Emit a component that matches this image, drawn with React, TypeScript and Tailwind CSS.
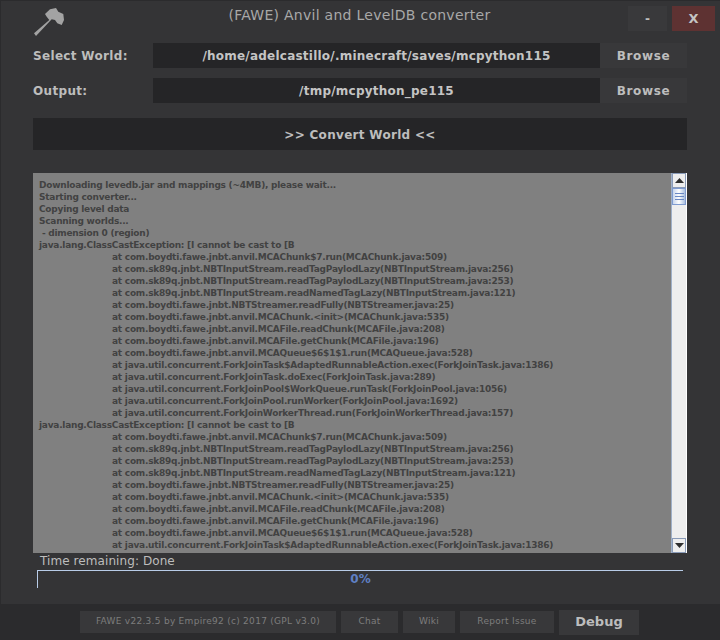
// App.tsx
const FONT = "font-['DejaVu_Sans',sans-serif]";

const trace1 = [
  'at com.boydti.fawe.jnbt.anvil.MCAChunk$7.run(MCAChunk.java:509)',
  'at com.sk89q.jnbt.NBTInputStream.readTagPaylodLazy(NBTInputStream.java:256)',
  'at com.sk89q.jnbt.NBTInputStream.readTagPaylodLazy(NBTInputStream.java:253)',
  'at com.sk89q.jnbt.NBTInputStream.readNamedTagLazy(NBTInputStream.java:121)',
  'at com.boydti.fawe.jnbt.NBTStreamer.readFully(NBTStreamer.java:25)',
  'at com.boydti.fawe.jnbt.anvil.MCAChunk.<init>(MCAChunk.java:535)',
  'at com.boydti.fawe.jnbt.anvil.MCAFile.readChunk(MCAFile.java:208)',
  'at com.boydti.fawe.jnbt.anvil.MCAFile.getChunk(MCAFile.java:196)',
  'at com.boydti.fawe.jnbt.anvil.MCAQueue$6$1$1.run(MCAQueue.java:528)',
  'at java.util.concurrent.ForkJoinTask$AdaptedRunnableAction.exec(ForkJoinTask.java:1386)',
];
const trace2 = [
  'at java.util.concurrent.ForkJoinTask.doExec(ForkJoinTask.java:289)',
  'at java.util.concurrent.ForkJoinPool$WorkQueue.runTask(ForkJoinPool.java:1056)',
  'at java.util.concurrent.ForkJoinPool.runWorker(ForkJoinPool.java:1692)',
  'at java.util.concurrent.ForkJoinWorkerThread.run(ForkJoinWorkerThread.java:157)',
];

const head = [
  'Downloading levedb.jar and mappings (~4MB), please wait...',
  'Starting converter...',
  'Copying level data',
  'Scanning worlds...',
  '\u00a0- dimension 0 (region)',
];
const exception = 'java.lang.ClassCastException: [I cannot be cast to [B';

function PathRow({ label, value }: { label: string; value: string }) {
  return (
    <div className="flex h-[25px] items-center pl-[32px] pr-[33px]">
      <div className="w-[120px] text-[12px] font-bold tracking-[0.33px] text-[#bdbdbd]">{label}</div>
      <div className="flex h-full w-[447px] items-center justify-center bg-[#252527] text-[12px] font-bold tracking-[0.23px] text-[#c4c4c4]">
        {value}
      </div>
      <div className="flex h-full flex-1 items-center justify-center bg-[#38383a] text-[12px] font-bold tracking-[0.6px] text-[#bdbdbd]">
        Browse
      </div>
    </div>
  );
}

function FooterButton({ label, width }: { label: string; width: string }) {
  return (
    <div className={`flex h-[22px] items-center justify-center bg-[#38383a] text-[9px] tracking-[0.28px] text-[#7d7d7d] ${width}`}>
      {label}
    </div>
  );
}

export default function App() {
  return (
    <div className={`flex h-[640px] w-[720px] flex-col overflow-hidden bg-[#2b2b2d] ${FONT}`}>
      <div className="ml-px mt-px flex h-[603px] w-[719px] flex-col bg-[#343436]">
        {/* title bar */}
        <div className="relative flex h-[42px] shrink-0 items-start">
          <svg className="ml-[32px] mt-[6px]" width="32" height="30" viewBox="0 0 32 30">
            <path
              d="M12 7 L17 2.3 L23 1 L25.3 4.7 L30.3 7 L31 13 L28.7 18 L24.3 16.3 L22 13 L18.7 12.3 L3 29 L1 26.3 L16.3 13 L13.7 9.7 Z"
              fill="#a3a3a3"
            />
          </svg>
          <div className="absolute left-0 right-[2px] top-[4px] text-center text-[14px] tracking-[0.27px] text-[#a8a8a8]">
            (FAWE) Anvil and LevelDB converter
          </div>
          <div className="ml-auto mr-[5px] mt-[5px] flex gap-[5px]">
            <div className="flex h-[25px] w-[39px] items-center justify-center bg-[#39393b] text-[12px] font-bold text-[#bdbdbd]">-</div>
            <div className="flex h-[25px] w-[43px] items-center justify-center bg-[#5e3232] text-[13px] font-bold text-[#c4c4c4]">X</div>
          </div>
        </div>

        <div className="flex flex-col gap-[10px]">
          <PathRow label="Select World:" value="/home/adelcastillo/.minecraft/saves/mcpython115" />
          <PathRow label="Output:" value="/tmp/mcpython_pe115" />
        </div>

        {/* convert */}
        <div className="ml-[32px] mr-[33px] mt-[15px] flex h-[32px] items-center justify-center bg-[#252527] pt-[2px] text-[12px] font-bold tracking-[0.3px] text-[#bdbdbd]">
          &gt;&gt; Convert World &lt;&lt;
        </div>

        {/* log */}
        <div className="ml-[32px] mt-[23px] flex h-[380px] w-[654px] overflow-hidden bg-[#808080]">
          <div className="min-w-0 flex-1 overflow-hidden pl-[6px] pt-[6px] text-[9px] font-bold leading-[12px] tracking-[-0.24px] whitespace-nowrap text-[#424242]">
            {head.map((line) => (
              <div key={line}>{line}</div>
            ))}
            <div>{exception}</div>
            {trace1.map((line) => (
              <div key={line} className="pl-[73px]">{line}</div>
            ))}
            {trace2.map((line) => (
              <div key={line} className="pl-[73px]">{line}</div>
            ))}
            <div>{exception}</div>
            {trace1.map((line) => (
              <div key={line} className="pl-[73px]">{line}</div>
            ))}
            <div className="pl-[73px]">{trace2[0]}</div>
          </div>
          {/* scrollbar */}
          <div className="flex w-[16px] shrink-0 flex-col border-l border-r border-l-[#9fb0c8] border-r-white bg-[#eeeeee]">
            <div className="flex h-[15px] items-center justify-center border border-[#8a9bb8] bg-[#eeeeee]">
              <svg width="9" height="5" viewBox="0 0 9 5"><path d="M4.5 0 L9 5 H0 Z" fill="#2e2e2e" /></svg>
            </div>
            <div className="flex h-[17px] flex-col items-center justify-center gap-[2px] border border-[#7f9bd0] bg-gradient-to-r from-[#c8d6ec] via-white to-[#a9bfe0]">
              <div className="h-px w-[9px] bg-[#6a88c4]" />
              <div className="h-px w-[9px] bg-[#6a88c4]" />
              <div className="h-px w-[9px] bg-[#6a88c4]" />
            </div>
            <div className="flex-1" />
            <div className="flex h-[15px] items-center justify-center border border-[#8a9bb8] bg-[#eeeeee]">
              <svg width="9" height="5" viewBox="0 0 9 5"><path d="M0 0 H9 L4.5 5 Z" fill="#2e2e2e" /></svg>
            </div>
          </div>
        </div>

        {/* progress */}
        <div className="ml-[39px] h-[16px] text-[12px] leading-[16px] tracking-[0.08px] text-[#bdbdbd]">Time remaining: Done</div>
        <div className="ml-[36px] mt-px flex h-[18px] w-[646px] items-start justify-center border-l border-t border-l-[#b8cce8] border-t-[#b8cce8] text-[12px] leading-[16px] font-bold text-[#5f80c4]">
          0%
        </div>
      </div>

      {/* footer */}
      <div className="flex flex-1 items-center pl-[80px]">
        <FooterButton label="FAWE v22.3.5 by Empire92 (c) 2017 (GPL v3.0)" width="w-[256px]" />
        <div className="ml-[5px]"><FooterButton label="Chat" width="w-[57px]" /></div>
        <div className="ml-[5px]"><FooterButton label="Wiki" width="w-[52px]" /></div>
        <div className="ml-[5px]"><FooterButton label="Report Issue" width="w-[94px]" /></div>
        <div className="ml-[5px] flex h-[25px] w-[80px] items-center justify-center bg-[#38383a] text-[13px] font-bold text-[#bdbdbd]">
          Debug
        </div>
      </div>
    </div>
  );
}
